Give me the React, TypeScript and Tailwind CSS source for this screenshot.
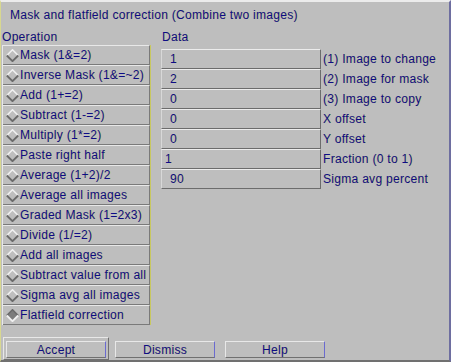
const operations = [
  'Mask (1&=2)',
  'Inverse Mask (1&=~2)',
  'Add (1+=2)',
  'Subtract (1-=2)',
  'Multiply (1*=2)',
  'Paste right half',
  'Average (1+2)/2',
  'Average all images',
  'Graded Mask (1=2x3)',
  'Divide (1/=2)',
  'Add all images',
  'Subtract value from all',
  'Sigma avg all images',
  'Flatfield correction',
];

const fields = [
  { value: '1', label: '(1) Image to change', pad: 'pl-[8px]' },
  { value: '2', label: '(2) Image for mask', pad: 'pl-[8px]' },
  { value: '0', label: '(3) Image to copy', pad: 'pl-[8px]' },
  { value: '0', label: 'X offset', pad: 'pl-[8px]' },
  { value: '0', label: 'Y offset', pad: 'pl-[8px]' },
  { value: '1', label: 'Fraction (0 to 1)', pad: 'pl-[3px]' },
  { value: '90', label: 'Sigma avg percent', pad: 'pl-[8px]' },
];

const fg = 'text-[#0c0c88] [text-shadow:1px_0_0_rgba(200,190,0,0.35)]';

function Diamond({ on }: { on: boolean }) {
  return (
    <svg width="13" height="13" viewBox="0 0 13 13" className="shrink-0">
      <polygon points="6.5,0.5 12.5,6.5 6.5,12.5 0.5,6.5" fill={on ? '#7c7c7c' : '#bebebe'} />
      <polyline
        points="0.8,6.5 6.5,0.8 12.2,6.5"
        fill="none"
        stroke={on ? '#6a6a6a' : '#f0f0f0'}
        strokeWidth="1.6"
      />
      <polyline
        points="0.8,6.5 6.5,12.2 12.2,6.5"
        fill="none"
        stroke={on ? '#f0f0f0' : '#6a6a6a'}
        strokeWidth="1.8"
      />
    </svg>
  );
}

function PushButton({ label }: { label: string }) {
  return (
    <div
      className={`flex h-[17px] w-[100px] items-center justify-center border border-t-[#e8e8e8] border-l-[#e8e8e8] border-b-[#707070] border-r-[#6a6ad0] ${fg}`}
    >
      {label}
    </div>
  );
}

export default function App() {
  return (
    <div className="h-[362px] w-[451px] overflow-hidden bg-[#bebebe] font-['Liberation_Sans',Arial,sans-serif] text-[12px] tracking-[0.3px]">
      <div className="flex h-full flex-col border-t-2 border-l border-r-2 border-b-2 border-t-[#ececec] border-l-[#d8d890] border-r-[#6e6ea0] border-b-[#707070]">
        <div className={`flex h-[26px] items-center pl-[9px] ${fg}`}>
          Mask and flatfield correction (Combine two images)
        </div>

        <div className="flex">
          <div className="ml-[1px] w-[149px]">
            <div className={`flex h-[17px] items-center ${fg}`}>Operation</div>
            <div className="border-l border-r border-l-[#e8e8e8] border-r-[#c8c860]">
              {operations.map((op, i) => (
                <div
                  key={op}
                  className={`flex h-[20px] items-center gap-[1px] border-t border-b border-r border-t-[#e8e8e8] border-b-[#7a7a7a] border-r-[#7a7a7a] pl-[3px] ${fg}`}
                >
                  <Diamond on={i === operations.length - 1} />
                  <span className="whitespace-nowrap">{op}</span>
                </div>
              ))}
            </div>
          </div>

          <div className="ml-[10px]">
            <div className={`flex h-[17px] items-center pl-[1px] ${fg}`}>Data</div>
            <div className="mt-[4px]">
              {fields.map((f) => (
                <div key={f.label} className="flex h-[20px] items-center">
                  <div
                    className={`flex h-[20px] w-[160px] items-center border border-t-[#ececec] border-l-[#d8d8d8] border-b-[#6c6c6c] border-r-[#6c6c6c] ${f.pad} ${fg}`}
                  >
                    {f.value}
                  </div>
                  <div className={`whitespace-nowrap pl-[2px] ${fg}`}>{f.label}</div>
                </div>
              ))}
            </div>
          </div>
        </div>

        <div className="mt-[12px] flex items-start">
          <div className="ml-[2px] border border-t-[#e8e8e8] border-l-[#e8e8e8] border-b-[#707070] border-r-[#707070] px-[2px] pt-[3px] pb-[1px]">
            <PushButton label="Accept" />
          </div>
          <div className="ml-[6px] mt-[4px]">
            <PushButton label="Dismiss" />
          </div>
          <div className="ml-[10px] mt-[4px]">
            <PushButton label="Help" />
          </div>
        </div>
      </div>
    </div>
  );
}
